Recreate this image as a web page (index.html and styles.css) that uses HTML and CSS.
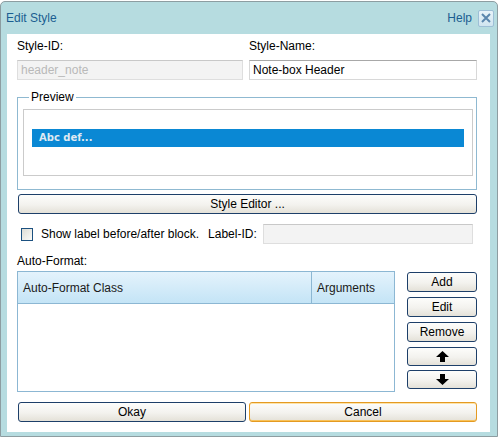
FILE: index.html
```html
<!DOCTYPE html>
<html>
<head>
<meta charset="utf-8">
<link rel="stylesheet" href="styles.css">
</head>
<body>
<div class="dialog">
  <div class="titlebar">
    <span class="title">Edit Style</span>
    <span class="help">Help</span>
    <span class="close"><svg width="10" height="10" viewBox="0 0 10 10"><path d="M1 1 L9 9 M9 1 L1 9" stroke="#5a86ad" stroke-width="2" fill="none"/></svg></span>
  </div>
  <div class="content">
    <div class="names">
      <div class="field">
        <div class="lbl">Style-ID:</div>
        <div class="input disabled">header_note</div>
      </div>
      <div class="field">
        <div class="lbl">Style-Name:</div>
        <div class="input">Note-box Header</div>
      </div>
    </div>
    <fieldset class="preview">
      <legend>Preview</legend>
      <div class="preview-inner">
        <div class="sample">Abc def...</div>
      </div>
    </fieldset>
    <button class="btn wide">Style Editor ...</button>
    <div class="labelrow">
      <span class="checkbox"></span>
      <span class="cb-text">Show label before/after block.</span>
      <span class="lid">Label-ID:</span>
      <div class="input disabled grow"></div>
    </div>
    <div class="af-label">Auto-Format:</div>
    <div class="af-row">
      <div class="table">
        <div class="thead">
          <div class="th first">Auto-Format Class</div>
          <div class="th">Arguments</div>
        </div>
        <div class="tbody"></div>
      </div>
      <div class="side">
        <button class="btn side-btn">Add</button>
        <button class="btn side-btn">Edit</button>
        <button class="btn side-btn">Remove</button>
        <button class="btn side-btn arrow"><svg width="13" height="11" viewBox="0 0 13 11"><path d="M6.5 0 L13 6 L9 6 L9 11 L4 11 L4 6 L0 6 Z" fill="#000"/></svg></button>
        <button class="btn side-btn arrow last"><svg width="13" height="11" viewBox="0 0 13 11"><path d="M6.5 11 L13 5 L9 5 L9 0 L4 0 L4 5 L0 5 Z" fill="#000"/></svg></button>
      </div>
    </div>
    <div class="footer">
      <button class="btn">Okay</button>
      <button class="btn focus">Cancel</button>
    </div>
  </div>
</div>
</body>
</html>
```

FILE: styles.css
```css
* { box-sizing: border-box; }
html, body {
  margin: 0;
  padding: 0;
  background: #ffffff;
  font-family: "Liberation Sans", Arial, sans-serif;
  font-size: 12px;
  color: #000;
}
body { padding-top: 1px; }
.dialog {
  width: 498px;
  height: 436px;
  border: 1px solid #8d9da1;
  border-radius: 5px 5px 0 0;
  background: #b6dce0;
}
.titlebar {
  height: 32px;
  display: flex;
  align-items: center;
  padding: 0 3px 0 5px;
}
.title {
  color: #1b5e91;
  font-size: 12px;
  flex: 1;
}
.help {
  color: #1b5e91;
  margin-right: 6px;
}
.close {
  width: 16px;
  height: 17px;
  border: 1px solid #9dbfd6;
  border-radius: 2px;
  background: linear-gradient(#e8f3f9, #d0e5f0);
  display: flex;
  align-items: center;
  justify-content: center;
}
.content {
  background: #fff;
  margin: 0 7px 0 6px;
  height: 398px;
  padding: 5px 13px 10px 10px;
}
.names {
  display: grid;
  grid-template-columns: 226px 228px;
  column-gap: 6px;
}
.lbl {
  line-height: 15px;
  height: 15px;
  margin-bottom: 6px;
}
.input {
  height: 20px;
  border: 1px solid #d8d8d8;
  border-top-color: #a8a8a8;
  background: #fff;
  line-height: 18px;
  padding: 0 3px;
  white-space: nowrap;
  overflow: hidden;
}
.input.disabled {
  background: #f3f3f3;
  color: #b9b9b9;
  border-color: #dedede;
  border-top-color: #c8c8c8;
}
.preview {
  margin: 10px 0 0 0;
  border: 1px solid #8fb9d1;
  padding: 5px 3px 13px 5px;
  min-width: 0;
}
.preview legend {
  padding: 0 2px;
  margin-left: 6px;
  line-height: 14px;
  font-size: 12px;
}
.preview-inner {
  height: 67px;
  border: 1px solid #cbcbcb;
  padding: 19px 8px 0 8px;
}
.sample {
  height: 18px;
  background: #0a88d4;
  color: #dfe9f2;
  font-family: "DejaVu Sans", Verdana, sans-serif;
  font-weight: bold;
  font-size: 10px;
  line-height: 18px;
  padding-left: 7px;
}
.btn {
  font-family: "Liberation Sans", Arial, sans-serif;
  font-size: 12px;
  color: #000;
  height: 20px;
  border: 1px solid #1d3f69;
  border-radius: 3px;
  background: linear-gradient(#fdfdfb, #f3f2ee 55%, #e4e1d8);
  padding: 0;
  display: flex;
  align-items: center;
  justify-content: center;
}
.btn.wide {
  width: 459px;
  margin: 4px 0 0 1px;
}
.labelrow {
  margin-top: 10px;
  height: 20px;
  display: flex;
  align-items: center;
  padding-right: 4px;
}
.checkbox {
  width: 12px;
  height: 13px;
  border: 1px solid #1c5180;
  background: linear-gradient(135deg, #dcdcd5, #fbfbf8);
  margin-left: 4px;
  margin-right: 8px;
}
.lid {
  margin-left: 9px;
  margin-right: 6px;
}
.grow { flex: 1; }
.af-label {
  margin-top: 10px;
  line-height: 15px;
  height: 15px;
}
.af-row {
  margin-top: 2px;
  display: flex;
  gap: 12px;
}
.table {
  width: 378px;
  height: 121px;
  border: 1px solid #8cb7d3;
  display: flex;
  flex-direction: column;
}
.thead {
  height: 32px;
  display: flex;
  background: linear-gradient(#e4f3fc, #c4e4f6);
  border-bottom: 1px solid #8cb7d3;
}
.th {
  display: flex;
  align-items: center;
  padding-left: 5px;
  color: #1a1a1a;
  flex: 1;
}
.th.first {
  flex: 0 0 294px;
  border-right: 1px solid #8cb7d3;
}
.tbody { flex: 1; background: #fff; }
.side {
  width: 70px;
  display: flex;
  flex-direction: column;
  gap: 5px;
  margin-top: 1px;
}
.side-btn { width: 70px; }
.side-btn.arrow { height: 19px; }
.side-btn.last { margin-top: -1px; }
.footer {
  margin-top: 10px;
  padding-left: 1px;
  display: grid;
  grid-template-columns: 1fr 1fr;
  column-gap: 3px;
}
.btn.focus {
  border-color: #e49a22;
  box-shadow: inset 0 -1px 0 #f8c25a, inset 0 1px 0 #fde3a8;
}
```
